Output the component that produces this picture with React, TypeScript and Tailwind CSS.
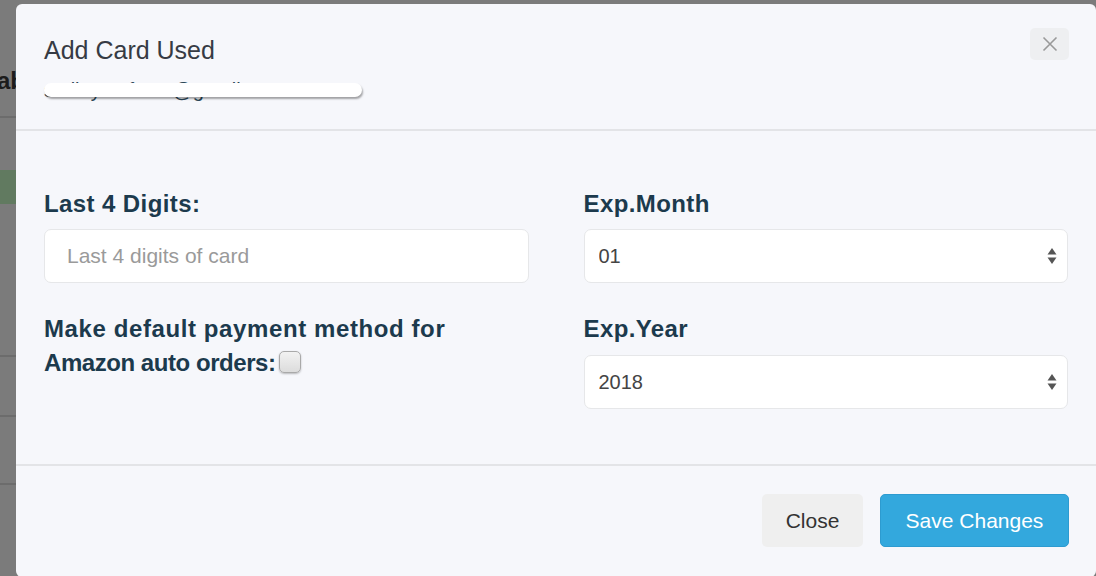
import React from 'react';

const font = { fontFamily: '"Liberation Sans", Arial, sans-serif' };

const Arrows: React.FC = () => (
  <svg className="pointer-events-none absolute right-[11px] top-1/2 -translate-y-1/2" width="10" height="18" viewBox="0 0 10 18">
    <path d="M5 1 L9.5 7.5 H0.5 Z" fill="#555" />
    <path d="M5 17 L9.5 10.5 H0.5 Z" fill="#555" />
  </svg>
);

const SelectBox: React.FC<{ value: string; options: string[] }> = ({ value, options }) => (
  <div className="relative">
    <select
      defaultValue={value}
      className="h-[54px] w-full appearance-none rounded-[7px] border-[1.5px] border-[#e6e7e9] bg-white pl-[14px] text-[20px] text-[#444] outline-none"
    >
      {options.map((o) => (
        <option key={o}>{o}</option>
      ))}
    </select>
    <Arrows />
  </div>
);

export default function App() {
  const months = ['01', '02', '03', '04', '05', '06', '07', '08', '09', '10', '11', '12'];
  const years = ['2018', '2019', '2020', '2021', '2022', '2023', '2024', '2025'];

  return (
    <div className="relative h-[576px] w-[1096px] overflow-hidden bg-[#7b7b7b]" style={font}>
      {/* page behind the backdrop */}
      <div className="flex flex-col">
        <div className="h-[66px]" />
        <div className="-ml-[3px] h-[30px] text-[24px] font-bold leading-[30px] text-[#1c1c1c]">ab</div>
        <div className="h-[20px]" />
        <div className="h-[2px] bg-[#6c6c6c]" />
        <div className="h-[52px]" />
        <div className="h-[34px] bg-[#617a60]" />
        <div className="h-[151px]" />
        <div className="h-[2px] bg-[#6c6c6c]" />
        <div className="h-[58px]" />
        <div className="h-[2px] bg-[#6c6c6c]" />
        <div className="h-[66px]" />
        <div className="h-[2px] bg-[#6c6c6c]" />
      </div>

      {/* modal */}
      <div className="absolute left-[16px] top-[4px] w-[1080px] rounded-[6px] bg-[#f6f7fb]">
        <div className="relative border-b-[2px] border-[#e3e4e7] px-[28px] pt-[29px] pb-[25px]">
          <h4 className="text-[25px] leading-[34px] text-[#363b44]">Add Card Used</h4>
          <div className="relative mt-[9px] w-fit text-[20px] leading-[28px] text-[#2b4757]">
            smileysurfer11@gmail.com
            <div className="absolute left-0 top-[7px] h-[14px] w-[318px] rounded-full bg-white shadow-[1px_2px_2px_rgba(0,0,0,0.35)]" />
          </div>
          <button className="absolute right-[27px] top-[24px] flex h-[32px] w-[39px] items-center justify-center rounded-[5px] bg-[#eeeff1]">
            <svg width="16" height="16" viewBox="0 0 16 16">
              <path d="M1.5 1.5 L14.5 14.5 M14.5 1.5 L1.5 14.5" stroke="#999" strokeWidth="1.6" />
            </svg>
          </button>
        </div>

        <div className="grid grid-cols-2 gap-x-[55px] gap-y-[29px] border-b-[2px] border-[#e3e4e7] px-[28px] pt-[56px] pb-[55px]">
          <div>
            <label className="mb-[8px] block text-[24px] font-bold leading-[34px] tracking-[0.4px] text-[#1c3a4d]">Last 4 Digits:</label>
            <input
              placeholder="Last 4 digits of card"
              className="h-[54px] w-full rounded-[7px] border-[1.5px] border-[#e6e7e9] bg-white px-[22px] text-[21px] text-[#444] outline-none placeholder:text-[#9a9a9a]"
            />
          </div>
          <div>
            <label className="mb-[8px] block text-[24px] font-bold leading-[34px] tracking-[0.4px] text-[#1c3a4d]">Exp.Month</label>
            <SelectBox value="01" options={months} />
          </div>
          <div>
            <label className="block text-[24px] font-bold leading-[34px] text-[#1c3a4d]">
              <span className="tracking-[0.6px]">Make default payment method for</span>
              <br />
              <span className="tracking-[-0.45px]">Amazon auto orders:</span>
              <input
                type="checkbox"
                className="relative top-[2px] ml-[4px] h-[22px] w-[22px] appearance-none rounded-[5px] border-[1.5px] border-[#a9a9a9] bg-gradient-to-b from-[#f2f2f2] to-[#dcdcdc] align-baseline shadow-[0_1px_2px_rgba(0,0,0,0.25)]"
              />
            </label>
          </div>
          <div>
            <label className="mb-[9px] block text-[24px] font-bold leading-[34px] tracking-[0.4px] text-[#1c3a4d]">Exp.Year</label>
            <SelectBox value="2018" options={years} />
          </div>
        </div>

        <div className="flex justify-end gap-[17px] px-[27px] pt-[28px] pb-[30px]">
          <button className="h-[53px] w-[101px] rounded-[5px] bg-[#efefef] text-[21px] text-[#333]">Close</button>
          <button className="h-[53px] w-[189px] rounded-[5px] border border-[#2d9bd0] bg-[#33a8dd] text-[21px] text-white">Save Changes</button>
        </div>
      </div>
    </div>
  );
}
